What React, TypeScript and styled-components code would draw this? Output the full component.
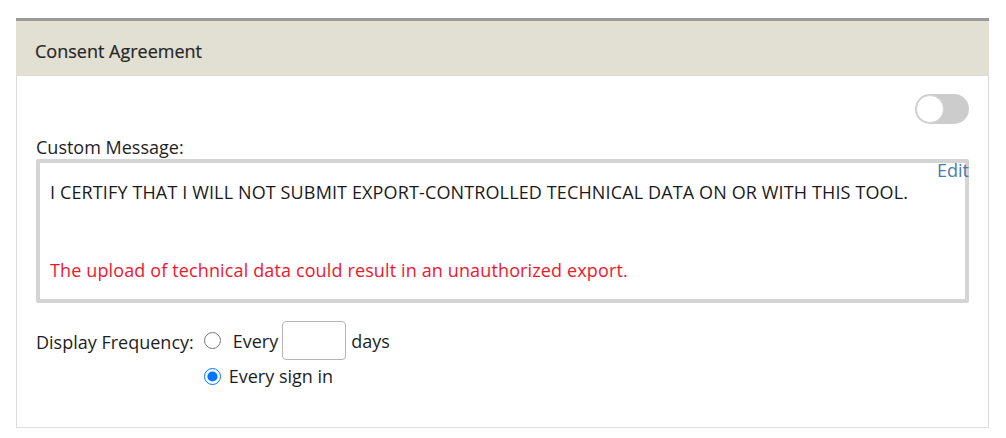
import * as React from 'react';
import styled, { createGlobalStyle } from 'styled-components';

const GlobalStyle = createGlobalStyle`
  html, body {
    margin: 0;
    padding: 0;
    background: #fff;
  }
  body {
    font-family: 'Open Sans', 'Liberation Sans', sans-serif;
    font-size: 18px;
    line-height: 24px;
    color: #1e1e1e;
  }
`;

const Page = styled.div`
  padding: 18px 17px 0 16px;
`;

const Panel = styled.section`
  border-top: 3px solid #9a9a9a;
`;

const PanelHeader = styled.div`
  background: #e2e0d3;
  height: 36px;
  padding: 18px 19px 0 19px;
  border-bottom: 1px solid #dcdcdc;
  font-size: 18px;
  font-weight: 500;
  color: #262626;
  -webkit-text-stroke: 0.2px #262626;
`;

const PanelBody = styled.div`
  border: 1px solid #dcdcdc;
  border-top: none;
  padding: 18px 19px 39px 19px;
  display: flex;
  flex-direction: column;
`;

const ToggleRow = styled.div`
  display: flex;
  justify-content: flex-end;
`;

const Toggle = styled.span<{ on?: boolean }>`
  display: inline-block;
  position: relative;
  width: 54px;
  height: 30px;
  border-radius: 15px;
  background: ${(p) => (p.on ? '#2196f3' : '#cccccc')};

  &::before {
    content: '';
    position: absolute;
    top: 1px;
    left: ${(p) => (p.on ? '25px' : '1px')};
    width: 26px;
    height: 26px;
    border-radius: 50%;
    background: #fff;
    border: 1px solid #d6d6d6;
  }
`;

const FieldLabel = styled.div`
  margin-top: 11px;
`;

const MessageBox = styled.div`
  position: relative;
  box-sizing: border-box;
  height: 144px;
  border: 4px solid #d4d4d4;
  border-radius: 2px;
  padding: 17px 10px 0 10px;
`;

const EditLink = styled.a`
  position: absolute;
  top: -5px;
  right: -4px;
  color: #4a78b0;
  text-decoration: none;
  cursor: pointer;
`;

const MessageLine = styled.p<{ warn?: boolean }>`
  margin: ${(p) => (p.warn ? '54px' : '0')} 0 0 0;
  color: ${(p) => (p.warn ? '#f0162f' : '#1a1a1a')};
  letter-spacing: 0.13px;
`;

const FrequencyRow = styled.div`
  display: flex;
  align-items: flex-start;
  margin-top: 18px;
`;

const FrequencyLabel = styled.span`
  margin-top: 9px;
  margin-right: 10px;
`;

const Options = styled.div`
  display: flex;
  flex-direction: column;
  gap: 4px;
`;

const Option = styled.label`
  display: flex;
  align-items: center;
`;

const Radio = styled.input`
  width: 17px;
  height: 17px;
  margin: 0;
  accent-color: #0075ff;
`;

const DaysInput = styled.input`
  width: 64px;
  height: 39px;
  box-sizing: border-box;
  border: 1px solid #b5b5b5;
  border-radius: 4px;
  margin: 0 5px 0 4px;
  font-size: 18px;
`;

const OptionText = styled.span<{ indent: number }>`
  margin-left: ${(p) => p.indent}px;
`;

export default function App() {
  return (
    <>
      <GlobalStyle />
      <Page>
        <Panel>
          <PanelHeader>Consent Agreement</PanelHeader>
          <PanelBody>
            <ToggleRow>
              <Toggle />
            </ToggleRow>
            <FieldLabel>Custom Message:</FieldLabel>
            <MessageBox>
              <EditLink>Edit</EditLink>
              <MessageLine>
                I CERTIFY THAT I WILL NOT SUBMIT EXPORT-CONTROLLED TECHNICAL DATA ON OR WITH THIS TOOL.
              </MessageLine>
              <MessageLine warn>
                The upload of technical data could result in an unauthorized export.
              </MessageLine>
            </MessageBox>
            <FrequencyRow>
              <FrequencyLabel>Display Frequency:</FrequencyLabel>
              <Options>
                <Option>
                  <Radio type="radio" name="freq" />
                  <OptionText indent={12}>Every</OptionText>
                  <DaysInput type="text" />
                  <OptionText indent={0}>days</OptionText>
                </Option>
                <Option>
                  <Radio type="radio" name="freq" defaultChecked />
                  <OptionText indent={8}>Every sign in</OptionText>
                </Option>
              </Options>
            </FrequencyRow>
          </PanelBody>
        </Panel>
      </Page>
    </>
  );
}
